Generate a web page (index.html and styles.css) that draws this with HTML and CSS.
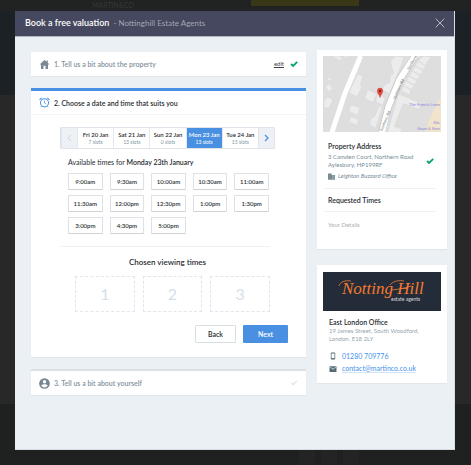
FILE: index.html
```html
<!DOCTYPE html>
<html lang="en">
<head>
<meta charset="utf-8">
<meta name="viewport" content="width=device-width, initial-scale=1">
<title>Book a free valuation</title>
<link rel="stylesheet" href="styles.css">
</head>
<body>
<div class="backdrop" aria-hidden="true">
  <div class="backdrop-top"><span class="backdrop-brand">MARTIN&amp;CO</span><span class="backdrop-cta"></span></div>
  <div class="backdrop-bottom"><i></i><i></i><i></i></div>
</div>
<main class="modal">
  <header class="modal-header">
    <h1>Book a free valuation</h1>
    <span class="agent">- Nottinghill Estate Agents</span>
    <button class="close" aria-label="Close"><svg width="10" height="10" viewBox="0 0 10 10"><path d="M.7.7l8.6 8.6M9.3.7L.7 9.3" stroke="#c4c6d0" stroke-width=".9"/></svg></button>
  </header>
  <div class="modal-body">
    <div class="steps">
      <section class="card step step-done">
        <svg class="step-icon" viewBox="0 0 12 12"><path d="M6 1L.6 6h1.6v5h2.7V7.4h2.2V11h2.7V6h1.6L9.6 4.2V1.7H8.2v1.2z" fill="#7b8896"/></svg>
        <h2>1. Tell us a bit about the property</h2>
        <a class="edit" href="#">edit</a>
        <svg class="tick" viewBox="0 0 8 6"><path d="M1 3l2.1 2L7.2.9" fill="none" stroke="#05a373" stroke-width="1.8"/></svg>
      </section>
      <section class="card step-active">
        <div class="step">
          <svg class="step-icon" viewBox="0 0 12 12" fill="none" stroke="#4a90e2"><circle cx="6" cy="6.4" r="4.4" stroke-width="1.1"/><path d="M6 3.9v2.7l1.8 1.1" stroke-width=".8"/><path d="M.6 3L3 .9M11.4 3L9 .9" stroke-width="1.1"/><path d="M2.9 9.9l-1 1.2M9.1 9.9l1 1.2" stroke-width=".8"/></svg>
          <h2>2. Choose a date and time that suits you</h2>
        </div>
        <div class="booking">
          <div class="dates">
            <button class="arrow" aria-label="Earlier dates"><svg width="5" height="8" viewBox="0 0 5 8"><path d="M4 1L1 4l3 3" fill="none" stroke="#ccd5dd"/></svg></button>
            <button class="date"><b>Fri 20 Jan</b><small>7 slots</small></button>
            <button class="date"><b>Sat 21 Jan</b><small>13 slots</small></button>
            <button class="date"><b>Sun 22 Jan</b><small>0 slots</small></button>
            <button class="date selected"><b>Mon 23 Jan</b><small>13 slots</small></button>
            <button class="date"><b>Tue 24 Jan</b><small>15 slots</small></button>
            <button class="arrow" aria-label="Later dates"><svg width="5" height="8" viewBox="0 0 5 8"><path d="M1 1l3 3-3 3" fill="none" stroke="#4a90e2" stroke-width="1.3"/></svg></button>
          </div>
          <p class="available">Available times for <b>Monday 23th January</b></p>
          <div class="times">
            <button>9:00am</button><button>9:30am</button><button>10:00am</button><button>10:30am</button><button>11:00am</button>
            <button>11:30am</button><button>12:00pm</button><button>12:30pm</button><button>1:00pm</button><button>1:30pm</button>
            <button>3:00pm</button><button>4:30pm</button><button>5:00pm</button>
          </div>
          <div class="chosen">
            <h3>Chosen viewing times</h3>
            <div class="slots"><div>1</div><div>2</div><div>3</div></div>
          </div>
        </div>
        <div class="actions"><button class="back">Back</button><button class="next">Next</button></div>
      </section>
      <section class="card step step-next">
        <svg class="step-icon" viewBox="0 0 12 12"><circle cx="6" cy="6" r="5.800" fill="#76848f"/><circle cx="6" cy="4" r="1.900" fill="#fff"/><path d="M2.400 8.300C2.900 6.900 4.800 6.700 6 6.700s3.100 .2 3.600 1.600C8.800 9.700 7.400 10.300 6 10.300s-2.800-.6-3.600-2z" fill="#fff"/></svg>
        <h2>3. Tell us a bit about yourself</h2>
        <svg class="tick" viewBox="0 0 8 6"><path d="M1.300 3l1.800 1.700L6.900.9" fill="none" stroke="#dce3e8" stroke-width="1.300"/></svg>
      </section>
    </div>
    <aside class="sidebar">
      <section class="card summary">
        <svg class="map" viewBox="0 0 119 77" role="img" aria-label="Map of Northern Road">
          <rect width="119" height="77" fill="#dedede"/>
          <g fill="#ececec" stroke="#d2d5d6" stroke-width=".5">
            <path d="M8 0l10 5 2-5zM17 0h9l-2 2zM2 31l4-3 4 5-4 3zM4 23l4-2 1 3-3 1zM1 45l4-4 5 3-4 9-5-1zM28 49l9 3-2 8-9-4zM28 61l8 3-2 6-8-4zM35 18l5 2-2 9 1 3-5 9-8-4zM45 34l9 4-3 9-9-4zM55 38l8 4-3 8-7-4zM57 50l3 1-7 22-6-4 1-6 4-2zM68 5l5-5 9 1-5 13-10 24-7-4 2-5 5-2 1-8 3-1zM76 38l23 10-2 6-16-6-9 23 8 3-2 3H65z"/>
            <path d="M96 4l6-4 7 1-6 9zM93 10l3-5 8 5-3 4zM90 15l3-5 8 5-3 4zM87 20l3-5 8 5-3 4zM84 25l3-5 8 5-3 4zM81 30l3-5 8 5-3 4zM79 35l2-5 8 4-2 5z"/>
          </g>
          <path d="M119 41l-4 7-8 17-4 12h16z" fill="#f2e4cc"/>
          <path d="M38 0L22 38 9 77" fill="none" stroke="#fff" stroke-width="5"/>
          <path d="M93 0L77 24 66 51 59 77" fill="none" stroke="#c8c8c8" stroke-width="7.500"/>
          <path d="M94-2L77 24 66 51 59 79" fill="none" stroke="#fff" stroke-width="6"/>
          <g class="road-name"><text transform="translate(87 14) rotate(-59)">Northern</text><text transform="translate(73 44) rotate(-66)">Northern Rd</text><text transform="translate(60 76) rotate(-68)">Northern Rd</text></g>
          <g class="place" text-anchor="end"><text x="118" y="50">The French Linen</text><text x="118" y="69">Kitc</text><text x="118" y="75">Grant &amp; Ston</text></g>
          <path d="M57.500 42c-.4-3-2.700-4-2.700-6.700a2.700 2.900 0 0 1 5.400 0c0 2.700-2.300 3.700-2.700 6.700z" fill="#e94335" stroke="#b9362d" stroke-width=".4"/><circle cx="57.500" cy="35.300" r="1" fill="#611812"/>
        </svg>
        <div class="summary-row address">
          <div>
            <h3>Property Address</h3>
            <p>3 Camden Court, Northern Road<br>Aylesbury, HP199RF</p>
            <p class="office"><svg width="7" height="7" viewBox="0 0 7 7"><path d="M0 .5h3.700V2H7v4.700H0z" fill="#788b94"/><path d="M4.200 3h2m-2 1.300h2m-2 1.300h2" stroke="#cbd3d7" stroke-width=".5"/></svg><em>Leighton Buzzard Office</em></p>
          </div>
          <svg class="tick" viewBox="0 0 8 6"><path d="M1 3l2.100 2L7.200.9" fill="none" stroke="#05a373" stroke-width="1.800"/></svg>
        </div>
        <div class="summary-row"><h3>Requested Times</h3></div>
        <div class="summary-row details">Your Details</div>
      </section>
      <section class="card contact">
        <svg class="logo" viewBox="0 0 118 39" role="img" aria-label="Notting Hill estate agents"><rect width="118" height="39" fill="#242c39"/><text class="script" x="19" y="22">Notting Hill</text><path d="M16 14c1-4 6-6 12-5M67 13c3-4 9-5 14-4M69 18c8-1 14-2 19-4" fill="none" stroke="#f47a30" stroke-width=".8"/><text class="strap" x="68" y="29">estate agents</text></svg>
        <div class="contact-text">
          <h3>East London Office</h3>
          <p>19 James Street, South Woodford,<br>London. E18 2LY</p>
          <a href="tel:01280709776"><svg width="8" height="8" viewBox="0 0 8 8"><rect x="1.800" y=".4" width="4.400" height="7.200" rx=".8" fill="#526b75"/><path d="M2.500 1.500h3v4.600h-3z" fill="#fff"/></svg>01280 709776</a>
          <a href="mailto:contact@martinco.co.uk"><svg width="8" height="8" viewBox="0 0 8 8"><rect x=".5" y="1.200" width="7" height="5.800" rx=".6" fill="#526b75"/><path d="M1.200 2.200L4 4.200l2.800-2" fill="none" stroke="#fff" stroke-width=".7"/></svg><span class="underlined">contact@martinco.co.uk</span></a>
        </div>
      </section>
    </aside>
  </div>
</main>
</body>
</html>
```
FILE: styles.css
```css
* { box-sizing: border-box; }
body {
  margin: 0;
  min-height: 100vh;
  padding: 11px 16px 15px 15px;
  display: flex;
  background: linear-gradient(#1b2124 95px, #282828 95px, #282828 404px, #1f2120 404px);
  font: 6px/8px Lato, "Open Sans", sans-serif;
  color: #292d30;
}
h1, h2, h3, p { margin: 0; }
button { font: inherit; color: inherit; padding: 0; margin: 0; border: 0; background: none; display: flex; align-items: center; justify-content: center; white-space: nowrap; }
svg { display: block; flex: none; }
b { font-weight: 600; }

.backdrop { position: absolute; inset: 0; z-index: -1; display: flex; flex-direction: column; justify-content: space-between; }
.backdrop-top { display: flex; padding-left: 92px; gap: 118px; height: 11px; background: #202321; }
.backdrop-brand { font-size: 7px; line-height: 10px; color: #343736; width: 41px; }
.backdrop-cta { width: 108px; height: 6px; background: #393718; }
.backdrop-bottom { display: flex; justify-content: flex-end; gap: 6px; padding-right: 112px; height: 15px; }
.backdrop-bottom i { width: 16px; background: #252425; }

.modal { flex: 1; min-width: 0; display: flex; flex-direction: column; background: #ebf0f4; border: solid #d8dee3; border-width: 0 1px 1px 0; }
.modal-header { display: flex; align-items: center; height: 26px; padding: 0 9px 1px 10px; background: #45485e; border-bottom: 1px solid #b2b6c1; color: #fff; gap: 4px; }
h1 { font-size: 9px; line-height: 12px; font-weight: 600; }
.agent { font-size: 8px; color: #a4a6b5; }
.close { margin-left: auto; }
.modal-body { display: grid; grid-template-columns: minmax(0, 275fr) minmax(0, 130fr); gap: 11px; padding: 13px 7px 16px 16px; }
.card { background: #fff; box-shadow: 0 1px 1px #e0e6ea; }

.steps { display: flex; flex-direction: column; gap: 12px; padding-top: 2px; }
.step { display: flex; align-items: center; height: 24px; padding: 0 8px; gap: 4px; }
.step-icon { width: 11px; height: 11px; }
.step h2 { font-size: 7px; line-height: 8px; font-weight: 600; flex: 1; }
.step-done h2, .step-next h2 { color: #84919d; }
.edit { color: #3c4145; text-underline-offset: 1px; margin-right: 2px; }
.tick { width: 8px; height: 6px; }
.step-active { border-top: 3px solid #4a90e2; padding-bottom: 14px; }
.step-active .step { border-bottom: 1px solid #f1f5f7; }
.step-next { border-top: 2px solid #dce0e2; height: 26px; }

.booking { padding: 12px 31px 0 29px; }
.dates { display: grid; grid-template-columns: 16px repeat(5, 1fr) 16px; height: 22px; border: 1px solid #dfe4ea; border-radius: 1px; }
.date { flex-direction: column; border-left: 1px solid #e5e9ef; font-size: 6px; line-height: 8px; }
.date small { font-size: 5px; line-height: 6px; color: #8297a5; }
.arrow { background: #edf1f6; border-left: 1px solid #e1e6ed; }
.date.selected, .date.selected small { color: #fff; background: #4a90e2; }
.available { padding: 8px 8px 6px; font-size: 7px; line-height: 10px; white-space: nowrap; }
.times { display: grid; grid-template-columns: repeat(5, 1fr); gap: 5px 7px; padding: 0 6px 0 8px; }
.times button { height: 17px; border: 1px solid #dfe1e6; border-bottom-color: #cfd2d7; border-radius: 1px; font-size: 6px; font-weight: 600; }
.chosen { margin: 12px 5px 0 0; border-top: 1px solid #eff1f3; }
.chosen h3 { padding: 10px 0 9px 5px; text-align: center; font-size: 8px; line-height: 10px; font-weight: 600; }
.slots { display: grid; grid-template-columns: repeat(3, 1fr); gap: 8px; padding-left: 15px; }
.slots div { height: 36px; display: flex; align-items: center; justify-content: center; border: 1px dashed #dfe6ed; font-size: 16px; color: #d5e0ea; }
.actions { display: flex; justify-content: flex-end; gap: 7px; padding: 13px 18px 0; }
.actions button { height: 18px; width: 41px; border-radius: 1px; font-size: 7px; font-weight: 600; }
.actions .back { border: 1px solid #d6e0e4; }
.actions .next { width: 45px; background: #4a90e2; color: #fff; }

.sidebar { display: flex; flex-direction: column; gap: 16px; }
.sidebar h3 { font-size: 7px; line-height: 10px; font-weight: 600; }
.summary { padding: 6px 6px 14px; }
.map { width: 100%; height: auto; }
.road-name, .place { font-family: "Liberation Sans", sans-serif; font-size: 4px; fill: #777; }
.place { fill: #8780dc; }
.summary-row { margin: 0 6px 0 2px; padding: 6px 3px; border-bottom: 1px solid #eef1f3; }
.address { display: flex; justify-content: space-between; align-items: center; padding: 9px 1px 8px 3px; color: #778d98; white-space: nowrap; }
.address h3 { color: #292d30; margin-bottom: 2px; }
.office { display: flex; align-items: center; gap: 3px; margin-top: 3px; }
.details { border: 0; padding-top: 9px; color: #a9b0b4; }
.contact { padding: 7px 6px 10px; }
.logo { width: 100%; height: auto; }
.script { font: italic 17px "Liberation Serif", serif; fill: #f47a30; }
.strap { font: 5px Lato, sans-serif; fill: #d8dbdf; }
.contact-text { padding: 6px 6px 0; color: #95a6af; white-space: nowrap; }
.contact h3 { color: #292d30; }
.contact a { display: flex; align-items: center; gap: 5px; margin-top: 4px; color: #3f92eb; text-decoration: none; font-size: 7px; line-height: 8px; }
.contact p + a { margin-top: 9px; }
.underlined { border-bottom: 1px solid #cfe2f7; }
```
